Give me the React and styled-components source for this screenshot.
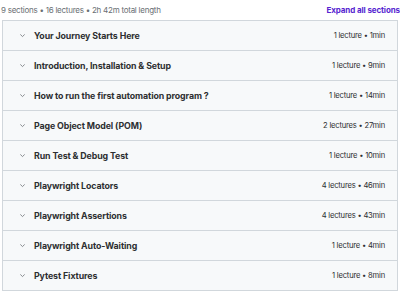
import React from "react";
import styled, { createGlobalStyle } from "styled-components";

const Global = createGlobalStyle`
  html, body { margin: 0; padding: 0; background: #fff; }
  body { font-family: Inter, "Noto Sans", sans-serif; color: #2d2f31; }
`;

const Page = styled.div`
  width: 400px;
  height: 292px;
  box-sizing: border-box;
  padding: 0 2px 0 2px;
  overflow: hidden;
`;

const Header = styled.div`
  display: flex;
  justify-content: space-between;
  align-items: center;
  height: 20px;
  margin-left: -1px;
  margin-right: -2px;
  padding-bottom: 1px;
  box-sizing: border-box;
`;

const Summary = styled.span`
  font-size: 8px;
  letter-spacing: -0.25px;
  color: #6a6f73;
`;

const Expand = styled.span`
  font-size: 8px;
  letter-spacing: -0.1px;
  font-weight: 700;
  color: #5624d0;
`;

const List = styled.div`
  border: 1px solid #d1d7dc;
  border-bottom: none;
`;

const Row = styled.div`
  display: flex;
  align-items: center;
  height: 29px;
  background: #f7f9fa;
  border-bottom: 1px solid #d1d7dc;
  padding: 0 12px 0 16px;
`;

const Chevron = styled.svg`
  width: 7px;
  height: 7px;
  margin-right: 8px;
  flex: none;
`;

const Title = styled.span`
  flex: 1;
  font-size: 8.8px;
  letter-spacing: -0.1px;
  font-weight: 700;
  color: #2d2f31;
`;

const Meta = styled.span`
  font-size: 7.6px;
  letter-spacing: -0.2px;
  color: #2d2f31;
`;

const sections = [
  ["Your Journey Starts Here", "1 lecture • 1min"],
  ["Introduction, Installation & Setup", "1 lecture • 9min"],
  ["How to run the first automation program ?", "1 lecture • 14min"],
  ["Page Object Model (POM)", "2 lectures • 27min"],
  ["Run Test & Debug Test", "1 lecture • 10min"],
  ["Playwright Locators", "4 lectures • 46min"],
  ["Playwright Assertions", "4 lectures • 43min"],
  ["Playwright Auto-Waiting", "1 lecture • 4min"],
  ["Pytest Fixtures", "1 lecture • 8min"],
];

export default function App() {
  return (
    <Page>
      <Global />
      <Header>
        <Summary>9 sections • 16 lectures • 2h 42m total length</Summary>
        <Expand>Expand all sections</Expand>
      </Header>
      <List>
        {sections.map(([t, m]) => (
          <Row key={t}>
            <Chevron viewBox="0 0 8 8">
              <path d="M1.5 2.8 L4 5.2 L6.5 2.8" fill="none" stroke="#6a6f73" strokeWidth="0.9" />
            </Chevron>
            <Title>{t}</Title>
            <Meta>{m}</Meta>
          </Row>
        ))}
      </List>
    </Page>
  );
}
